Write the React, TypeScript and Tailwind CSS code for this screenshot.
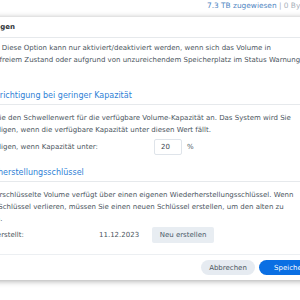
export default function App() {
  return (
    <div className="relative w-[300px] h-[300px] overflow-hidden bg-white font-['DejaVu_Sans',sans-serif] text-[7px] leading-[12px] text-[#4b5560]">
      {/* Page behind the dialog */}
      <div className="h-[17px] pl-[207px] whitespace-nowrap text-[7.4px] leading-[11px]">
        <span className="text-[#4f86c2]">7.3 TB zugewiesen</span>
        <span className="text-[#a9b1ba]"> | 0 Bytes verwendet</span>
      </div>

      {/* Dialog */}
      <div className="ml-[-44px] w-[380px] bg-white shadow-[0_1px_6px_rgba(0,0,0,0.35)]">
        <div className="flex h-[21px] items-center border-b border-[#e6e9ec] pl-[5px] font-bold text-[#2e3338]">
          Einstellungen
        </div>

        <div className="whitespace-nowrap pl-[14px] pt-[4px] pb-[11px]">
          <p>
            Hinweis: Diese Option kann nur aktiviert/deaktiviert werden, wenn sich das Volume in
            <br />
            einwandfreiem Zustand oder aufgrund von unzureichendem Speicherplatz im Status Warnung befindet.
          </p>

          <h3 className="mt-[24px] border-b border-[#e6e9ec] pb-[2px] text-[8px] text-[#2f7fd6]">
            Benachrichtigung bei geringer Kapazität
          </h3>
          <p className="mt-[7px]">
            Geben Sie den Schwellenwert für die verfügbare Volume-Kapazität an. Das System wird Sie
            <br />
            verständigen, wenn die verfügbare Kapazität unter diesen Wert fällt.
          </p>
          <div className="mt-[3px] flex h-[16px] items-center">
            <span className="w-[184px]">Verständigen, wenn Kapazität unter:</span>
            <div className="flex h-[16px] w-[28px] items-center rounded-[2px] border border-[#dfe4ea] pl-[6px] text-[#3c4650]">
              20
            </div>
            <span className="ml-[5px]">%</span>
          </div>

          <h3 className="mt-[12px] border-b border-[#e6e9ec] pb-[2px] text-[8px] text-[#2f7fd6]">
            Wiederherstellungsschlüssel
          </h3>
          <p className="mt-[7px]">
            Jedes verschlüsselte Volume verfügt über einen eigenen Wiederherstellungsschlüssel. Wenn
            <br />
            Sie den Schlüssel verlieren, müssen Sie einen neuen Schlüssel erstellen, um den alten zu
            <br />
            ersetzen.
          </p>
          <div className="mt-[2px] flex h-[16px] items-center">
            <span className="w-[129px]">Zuletzt erstellt:</span>
            <span>11.12.2023</span>
            <button className="ml-[13px] flex h-[16px] w-[62px] items-center justify-center rounded-[2px] bg-[#e8edf2] text-[#4b5a6a]">
              Neu erstellen
            </button>
          </div>
        </div>

        <div className="flex justify-end gap-[4px] border-t border-[#eceff2] pt-[5px] pb-[5px] pr-[12px]">
          <button className="flex h-[15px] w-[54px] items-center justify-center rounded-full bg-[#e6ebf1] text-[#4b5560]">
            Abbrechen
          </button>
          <button className="flex h-[15px] w-[65px] items-center justify-center rounded-full bg-[#0a6fe3] text-white">
            Speichern
          </button>
        </div>
      </div>
    </div>
  );
}
